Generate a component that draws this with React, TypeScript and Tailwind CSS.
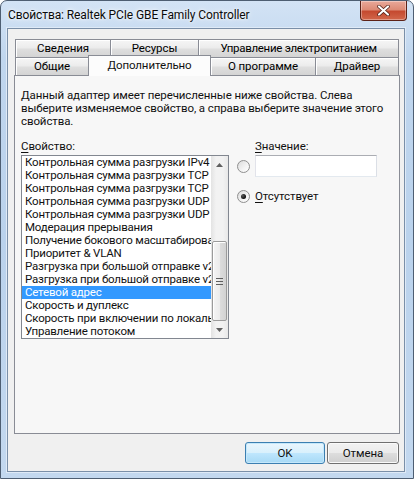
import React from "react";

const items = [
  "Контрольная сумма разгрузки IPv4",
  "Контрольная сумма разгрузки TCP (IPv4)",
  "Контрольная сумма разгрузки TCP (IPv6)",
  "Контрольная сумма разгрузки UDP (IPv4)",
  "Контрольная сумма разгрузки UDP (IPv6)",
  "Модерация прерывания",
  "Получение бокового масштабирования",
  "Приоритет & VLAN",
  "Разгрузка при большой отправке v2 (IPv4)",
  "Разгрузка при большой отправке v2 (IPv6)",
  "Сетевой адрес",
  "Скорость и дуплекс",
  "Скорость при включении по локальной сети",
  "Управление потоком",
];

const tabBase =
  "h-[18px] flex items-center justify-center border border-b-0 border-[#898c95] -ml-px first:ml-0 bg-[linear-gradient(180deg,#f6f6f6_0%,#ececec_45%,#dedede_55%,#d4d4d4_100%)] shadow-[inset_1px_1px_0_#ffffff] text-[#000]";

function Radio({ checked }: { checked?: boolean }) {
  return (
    <div className="w-[13px] h-[13px] rounded-full border border-[#8f8f8f] bg-[linear-gradient(135deg,#dcdcdc_0%,#f4f4f4_60%,#ffffff_100%)] flex items-center justify-center shrink-0">
      {checked && (
        <div className="w-[5px] h-[5px] rounded-full bg-[radial-gradient(circle_at_35%_35%,#5a5a5a_0%,#0c0c0c_70%)]" />
      )}
    </div>
  );
}

export default function App() {
  return (
    <div
      className="relative w-[414px] h-[479px] overflow-hidden rounded-t-[7px] border border-[#4e5e72] bg-[linear-gradient(180deg,#d3e3f5_0%,#c0d6ee_12%,#bad2ec_50%,#c3d8ef_100%)] flex flex-col text-[11.5px] leading-[13px] tracking-[-0.1px] text-[#111]"
      style={{ fontFamily: 'Roboto, "Noto Sans", sans-serif' }}
    >
      {/* Title bar */}
      <div className="h-[27px] shrink-0 flex items-center pl-[7px] pt-[1px] text-[12px] text-[#0b0b0b] [text-shadow:0_0_6px_#ffffff,0_0_3px_#ffffff]">
        Свойства: Realtek PCIe GBE Family Controller
      </div>
      {/* Close button */}
      <div className="absolute top-0 right-[6px] w-[47px] h-[20px] rounded-b-[4px] border border-t-0 border-[#5c2218] bg-[linear-gradient(180deg,#e9a99a_0%,#dd8b76_45%,#c54a30_55%,#d2674b_100%)] shadow-[inset_0_0_0_1px_rgba(255,255,255,0.35)] flex items-center justify-center">
        <svg width="13" height="11" viewBox="0 0 13 11">
          <path d="M2 1.5 L11 9.5 M11 1.5 L2 9.5" stroke="#4a1a12" strokeWidth="3.6" strokeLinecap="round" />
          <path d="M2 1.5 L11 9.5 M11 1.5 L2 9.5" stroke="#ffffff" strokeWidth="2.2" strokeLinecap="round" />
        </svg>
      </div>

      {/* Client area */}
      <div className="ml-[6px] mr-[8px] mb-[6px] flex-1 border border-[#7a8fa8] shadow-[0_0_0_1px_#dfeaf7] bg-[#f0f0f0] flex flex-col pl-[6px] pr-[4px] pt-[10px]">
        {/* Tabs */}
        <div className="flex pl-[1px]">
          <div className={`${tabBase} w-[96px]`}>Сведения</div>
          <div className={`${tabBase} w-[89px]`}>Ресурсы</div>
          <div className={`${tabBase} w-[201px] tracking-[-0.3px]`}>Управление электропитанием</div>
        </div>
        <div className="flex items-end h-[18px] pl-[1px]">
          <div className={`${tabBase} w-[74px]`}>Общие</div>
          <div className="relative top-[1px] z-10 -ml-px w-[123px] h-[21px] border border-b-0 border-[#898c95] bg-[#fcfcfc] flex items-start justify-center pt-[3px]">
            Дополнительно
          </div>
          <div className={`${tabBase} w-[106px]`}>О программе</div>
          <div className={`${tabBase} w-[84px]`}>Драйвер</div>
        </div>

        {/* Panel */}
        <div className="h-[359px] border border-[#898c95] bg-[#f7f7f7] pl-[6px] pt-[13px]">
          <div className="whitespace-nowrap">
            <div>Данный адаптер имеет перечисленные ниже свойства. Слева</div>
            <div>выберите изменяемое свойство, а справа выберите значение этого</div>
            <div>свойства.</div>
          </div>

          <div className="flex mt-[12px]">
            {/* Left column */}
            <div className="w-[208px] flex flex-col">
              <div>
                <span className="underline underline-offset-[2px]">С</span>войство:
              </div>
              <div className="mt-[2px] h-[184px] border border-[#828790] bg-white flex">
                <div className="w-[189px] flex flex-col tracking-[-0.2px]">
                  {items.map((it) => (
                    <div
                      key={it}
                      className={`h-[13px] pl-[3px] whitespace-nowrap overflow-hidden ${
                        it === "Сетевой адрес" ? "bg-[#3399ff] text-white" : ""
                      }`}
                    >
                      {it}
                    </div>
                  ))}
                </div>
                {/* Scrollbar */}
                <div className="w-[17px] flex flex-col bg-[linear-gradient(90deg,#e3e3e3_0%,#f2f2f2_30%,#f2f2f2_70%,#e8e8e8_100%)]">
                  <div className="h-[17px] flex items-center justify-center">
                    <svg width="7" height="4" viewBox="0 0 7 4">
                      <path d="M0 4 L3.5 0 L7 4 Z" fill="#606060" />
                    </svg>
                  </div>
                  <div className="flex-1 flex flex-col justify-end">
                    <div className="h-[80px] mx-[1px] rounded-[2px] border border-[#9b9b9b] bg-[linear-gradient(90deg,#f5f5f5_0%,#ececec_50%,#dcdcdc_55%,#d2d2d2_100%)] shadow-[inset_1px_1px_0_#ffffff] flex flex-col items-center justify-center gap-[2px]">
                      <div className="w-[7px] h-[1px] bg-[#5e5e5e]" />
                      <div className="w-[7px] h-[1px] bg-[#5e5e5e]" />
                      <div className="w-[7px] h-[1px] bg-[#5e5e5e]" />
                    </div>
                  </div>
                  <div className="h-[17px] flex items-center justify-center">
                    <svg width="7" height="4" viewBox="0 0 7 4">
                      <path d="M0 0 L7 0 L3.5 4 Z" fill="#606060" />
                    </svg>
                  </div>
                </div>
              </div>
            </div>

            {/* Right column */}
            <div className="ml-[8px] flex flex-col">
              <div className="pl-[18px]">
                <span className="underline underline-offset-[2px]">З</span>начение:
              </div>
              <div className="mt-[2px] h-[22px] flex items-center gap-[5px]">
                <Radio />
                <div className="w-[122px] h-[22px] border border-[#abadb3] border-l-[#e2e3ea] border-r-[#dbdfe6] border-b-[#e3e9ef] bg-white" />
              </div>
              <div className="mt-[13px] h-[13px] flex items-center gap-[5px]">
                <Radio checked />
                <span>
                  <span className="underline underline-offset-[2px]">О</span>тсутствует
                </span>
              </div>
            </div>
          </div>
        </div>

        {/* Buttons */}
        <div className="mt-[8px] flex justify-end gap-[2px] mr-[1px]">
          <div className="w-[80px] h-[22px] rounded-[3px] border border-[#3c7fb1] bg-[linear-gradient(180deg,#eaf6fd_0%,#d9f0fc_48%,#bee6fd_52%,#a7d9f5_100%)] shadow-[inset_0_0_0_1px_#c5e8fb] flex items-center justify-center">
            OK
          </div>
          <div className="w-[72px] h-[22px] rounded-[3px] border border-[#707070] bg-[linear-gradient(180deg,#f2f2f2_0%,#ebebeb_48%,#dddddd_52%,#cfcfcf_100%)] shadow-[inset_0_0_0_1px_#fafafa] flex items-center justify-center">
            Отмена
          </div>
        </div>
      </div>
    </div>
  );
}
